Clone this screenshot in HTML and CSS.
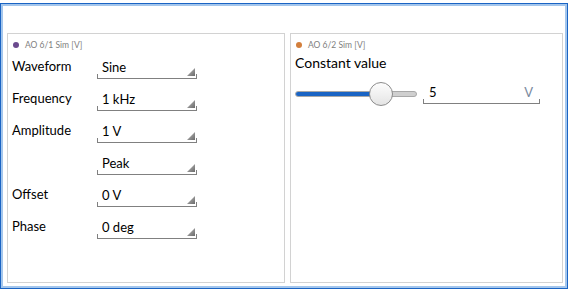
FILE: index.html
```html
<!DOCTYPE html>
<html lang="en">
<head>
  <meta charset="UTF-8" />
  <meta name="viewport" content="width=device-width, initial-scale=1.0" />
  <title>AO Sim Generators</title>
  <link rel="stylesheet" href="styles.css">
</head>
<body>
  <div class="window">
    <div class="frame">
      <div class="panels">
        <div class="panel">
          <div class="panel-title"><span class="dot dot-purple"></span>AO 6/1 Sim [V]</div>
          <div class="form">
            <div class="label">Waveform</div>
            <div class="field">Sine<span class="arrow"></span></div>
            <div class="label">Frequency</div>
            <div class="field">1 kHz<span class="arrow"></span></div>
            <div class="label">Amplitude</div>
            <div class="field">1 V<span class="arrow"></span></div>
            <div class="label"></div>
            <div class="field">Peak<span class="arrow"></span></div>
            <div class="label">Offset</div>
            <div class="field">0 V<span class="arrow"></span></div>
            <div class="label">Phase</div>
            <div class="field">0 deg<span class="arrow"></span></div>
          </div>
        </div>
        <div class="panel">
          <div class="panel-title"><span class="dot dot-orange"></span>AO 6/2 Sim [V]</div>
          <div class="const-label">Constant value</div>
          <div class="const-row">
            <div class="slider">
              <div class="track">
                <div class="track-fill" style="width: 72%"></div>
              </div>
              <div class="thumb"></div>
            </div>
            <div class="field num-field">5<span class="unit">V</span></div>
          </div>
        </div>
      </div>
    </div>
  </div>
</body>
</html>
```

FILE: styles.css
```css
body {
  margin: 0;
  background: #fff;
  font-family: Lato, 'Noto Sans', sans-serif;
  color: #000;
}
.window {
  margin-top: 3px;
  width: 568px;
  height: 286px;
  box-sizing: border-box;
  border: 1px solid #1a64c4;
}
.frame {
  height: 100%;
  box-sizing: border-box;
  border: 2px solid #a4c6ec;
  padding: 27px 2px 3px 4px;
}
.panels {
  display: grid;
  grid-template-columns: 278px 273px;
  gap: 5px;
  height: 100%;
}
.panel {
  border: 1px solid #d2d2d2;
  padding: 0 4px;
}
.panel-title {
  display: flex;
  align-items: center;
  gap: 6px;
  font-size: 8.5px;
  color: #808080;
  height: 22px;
  padding-left: 1px;
}
.dot {
  width: 6px;
  height: 6px;
  border-radius: 50%;
}
.dot-purple {
  background: #6b4a8e;
}
.dot-orange {
  background: #d37f3c;
}
.form {
  display: grid;
  grid-template-columns: 85px 100px;
  grid-auto-rows: 32px;
  align-items: center;
  margin-top: -6px;
}
.label {
  font-size: 13px;
}
.field {
  position: relative;
  height: 20px;
  box-sizing: border-box;
  border-bottom: 1px solid #808080;
  font-size: 13px;
  line-height: 17px;
  padding-left: 5px;
  margin-top: 6px;
}
.field::before,
.field::after {
  content: "";
  position: absolute;
  bottom: 0;
  width: 1px;
  height: 4px;
  background: #808080;
}
.field::before {
  left: 0;
}
.field::after {
  right: 0;
}
.arrow {
  position: absolute;
  right: 2px;
  bottom: 2px;
  width: 8px;
  height: 8px;
  background: linear-gradient(135deg, #c0c0c0, #6a6a6a);
  clip-path: polygon(100% 0, 100% 100%, 0 100%);
}
.const-label {
  font-size: 14px;
  margin-top: -2px;
}
.const-row {
  display: flex;
  align-items: flex-start;
  gap: 6px;
  margin-top: 11px;
}
.slider {
  position: relative;
  width: 122px;
  height: 24px;
  display: flex;
  align-items: center;
}
.track {
  width: 100%;
  height: 6px;
  box-sizing: border-box;
  border: 1px solid #a8a8a8;
  border-radius: 3px;
  background: #cfcfcf;
  overflow: hidden;
}
.track-fill {
  height: 100%;
  background: #1a64c4;
}
.thumb {
  position: absolute;
  left: 74px;
  top: 0;
  width: 24px;
  height: 24px;
  box-sizing: border-box;
  border-radius: 50%;
  border: 1px solid #8c8c8c;
  background: linear-gradient(#fdfdfd, #e4e4e4);
}
.num-field {
  width: 117px;
  margin-top: 2px;
  font-size: 13px;
  padding-left: 6px;
  display: flex;
  justify-content: space-between;
  padding-right: 7px;
}
.unit {
  color: #7a8aa0;
}
```
